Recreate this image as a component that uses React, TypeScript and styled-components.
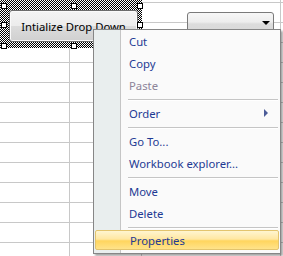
import React from 'react';
import styled, { createGlobalStyle } from 'styled-components';

const GlobalStyle = createGlobalStyle`
  html, body {
    margin: 0;
    padding: 0;
    background: #ffffff;
  }
  body {
    font-family: "Noto Sans", "Open Sans", "DejaVu Sans", sans-serif;
  }
`;

const Sheet = styled.div`
  position: relative;
  width: 283px;
  height: 256px;
  overflow: hidden;
  background-color: #ffffff;
  background-image:
    repeating-linear-gradient(to bottom, transparent 0 2px, #c8c8c8 2px 3px, transparent 3px 20px),
    repeating-linear-gradient(to right, transparent 0 69px, #c8c8c8 69px 70px, transparent 70px 72px);
  background-position: 0 0, -72px 0;
`;

const Selection = styled.div`
  position: absolute;
  left: 0;
  top: 0;
  width: 142px;
  height: 48px;
  padding: 10px 4px 6px 9px;
  box-sizing: border-box;
  display: flex;
  background-color: #ffffff;
  background-image: conic-gradient(#000000 0 25%, #ffffff 0 50%, #000000 0 75%, #ffffff 0);
  background-size: 2px 2px;
`;

const Handle = styled.div<{ $x: number; $y: number }>`
  position: absolute;
  left: ${(p) => p.$x}px;
  top: ${(p) => p.$y}px;
  width: 4px;
  height: 4px;
  background: #ffffff;
  border: 1px solid #000000;
`;

const SheetButton = styled.div`
  flex: 1;
  display: flex;
  align-items: center;
  justify-content: center;
  border: 1px solid #6c6c6c;
  border-radius: 3px;
  background-color: #e8e8e8;
  background-image: linear-gradient(to bottom, #f4f4f4 0%, #ececec 50%, #dcdcdc 51%, #d0d0d0 100%);
  box-shadow: inset 0 0 0 1px #fafafa;
  font-size: 11.3px;
  padding-top: 1px;
  color: #000000;
  white-space: nowrap;
`;

const Combo = styled.div`
  position: absolute;
  left: 187px;
  top: 12px;
  width: 87px;
  height: 22px;
  box-sizing: border-box;
  border: 1px solid #7a7a7a;
  border-radius: 3px;
  background: linear-gradient(to bottom, #f7f7f7 0%, #ededed 45%, #dcdcdc 55%, #d8d8d8 100%);
  display: flex;
  justify-content: flex-end;
  padding: 8px 3px 0 0;
`;

const ComboArrow = styled.div`
  width: 0;
  height: 0;
  border-left: 4px solid transparent;
  border-right: 4px solid transparent;
  border-top: 4px solid #000000;
`;

const Menu = styled.div`
  position: absolute;
  left: 93px;
  top: 29px;
  width: 188px;
  box-sizing: border-box;
  border: 1px solid #868686;
  background: linear-gradient(to right, #e9eeee 0 26px, #c5c5c5 26px 27px, #fafafa 27px);
  box-shadow: 2px 2px 2px rgba(0, 0, 0, 0.35);
  display: flex;
  flex-direction: column;
  padding-bottom: 1px;
`;

const Item = styled.div<{ $disabled?: boolean; $active?: boolean }>`
  position: relative;
  height: 22px;
  display: flex;
  align-items: center;
  justify-content: space-between;
  padding: 0 12px 0 35px;
  font-size: 11.3px;
  color: ${(p) => (p.$disabled ? '#8c8499' : '#1e3a94')};
  ${(p) =>
    p.$active &&
    `
    margin: 0 1px;
    padding-left: 34px;
    height: 20px;
    margin-bottom: 2px;
    border: 1px solid #e3c46d;
    border-radius: 2px;
    box-sizing: border-box;
    background: linear-gradient(to bottom, #fff5d0 0%, #ffe7a2 45%, #ffd55e 55%, #ffe38a 100%);
  `}
`;

const Separator = styled.div`
  height: 6px;
  display: flex;
  align-items: center;
  padding-left: 34px;
  padding-right: 2px;

  &::after {
    content: '';
    flex: 1;
    height: 1px;
    background: #c5c5c5;
    box-shadow: 0 1px 0 #ffffff;
  }
`;

const SubArrow = styled.div`
  width: 0;
  height: 0;
  border-top: 4px solid transparent;
  border-bottom: 4px solid transparent;
  border-left: 4px solid #4c5c98;
`;

const handles = [
  { x: 1, y: 3 },
  { x: 71, y: 3 },
  { x: 137, y: 3 },
  { x: 1, y: 22 },
  { x: 137, y: 22 },
  { x: 1, y: 43 },
  { x: 71, y: 43 },
  { x: 137, y: 43 },
];

const App: React.FC = () => {
  return (
    <>
      <GlobalStyle />
      <Sheet>
        <Selection>
          <SheetButton>Intialize Drop Down</SheetButton>
          {handles.map((h, i) => (
            <Handle key={i} $x={h.x} $y={h.y} />
          ))}
        </Selection>
        <Combo>
          <ComboArrow />
        </Combo>
        <Menu>
          <Item>Cut</Item>
          <Item>Copy</Item>
          <Item $disabled>Paste</Item>
          <Separator />
          <Item>
            Order
            <SubArrow />
          </Item>
          <Separator />
          <Item>Go To...</Item>
          <Item>Workbook explorer...</Item>
          <Separator />
          <Item>Move</Item>
          <Item>Delete</Item>
          <Separator />
          <Item $active>Properties</Item>
        </Menu>
      </Sheet>
    </>
  );
};

export default App;
